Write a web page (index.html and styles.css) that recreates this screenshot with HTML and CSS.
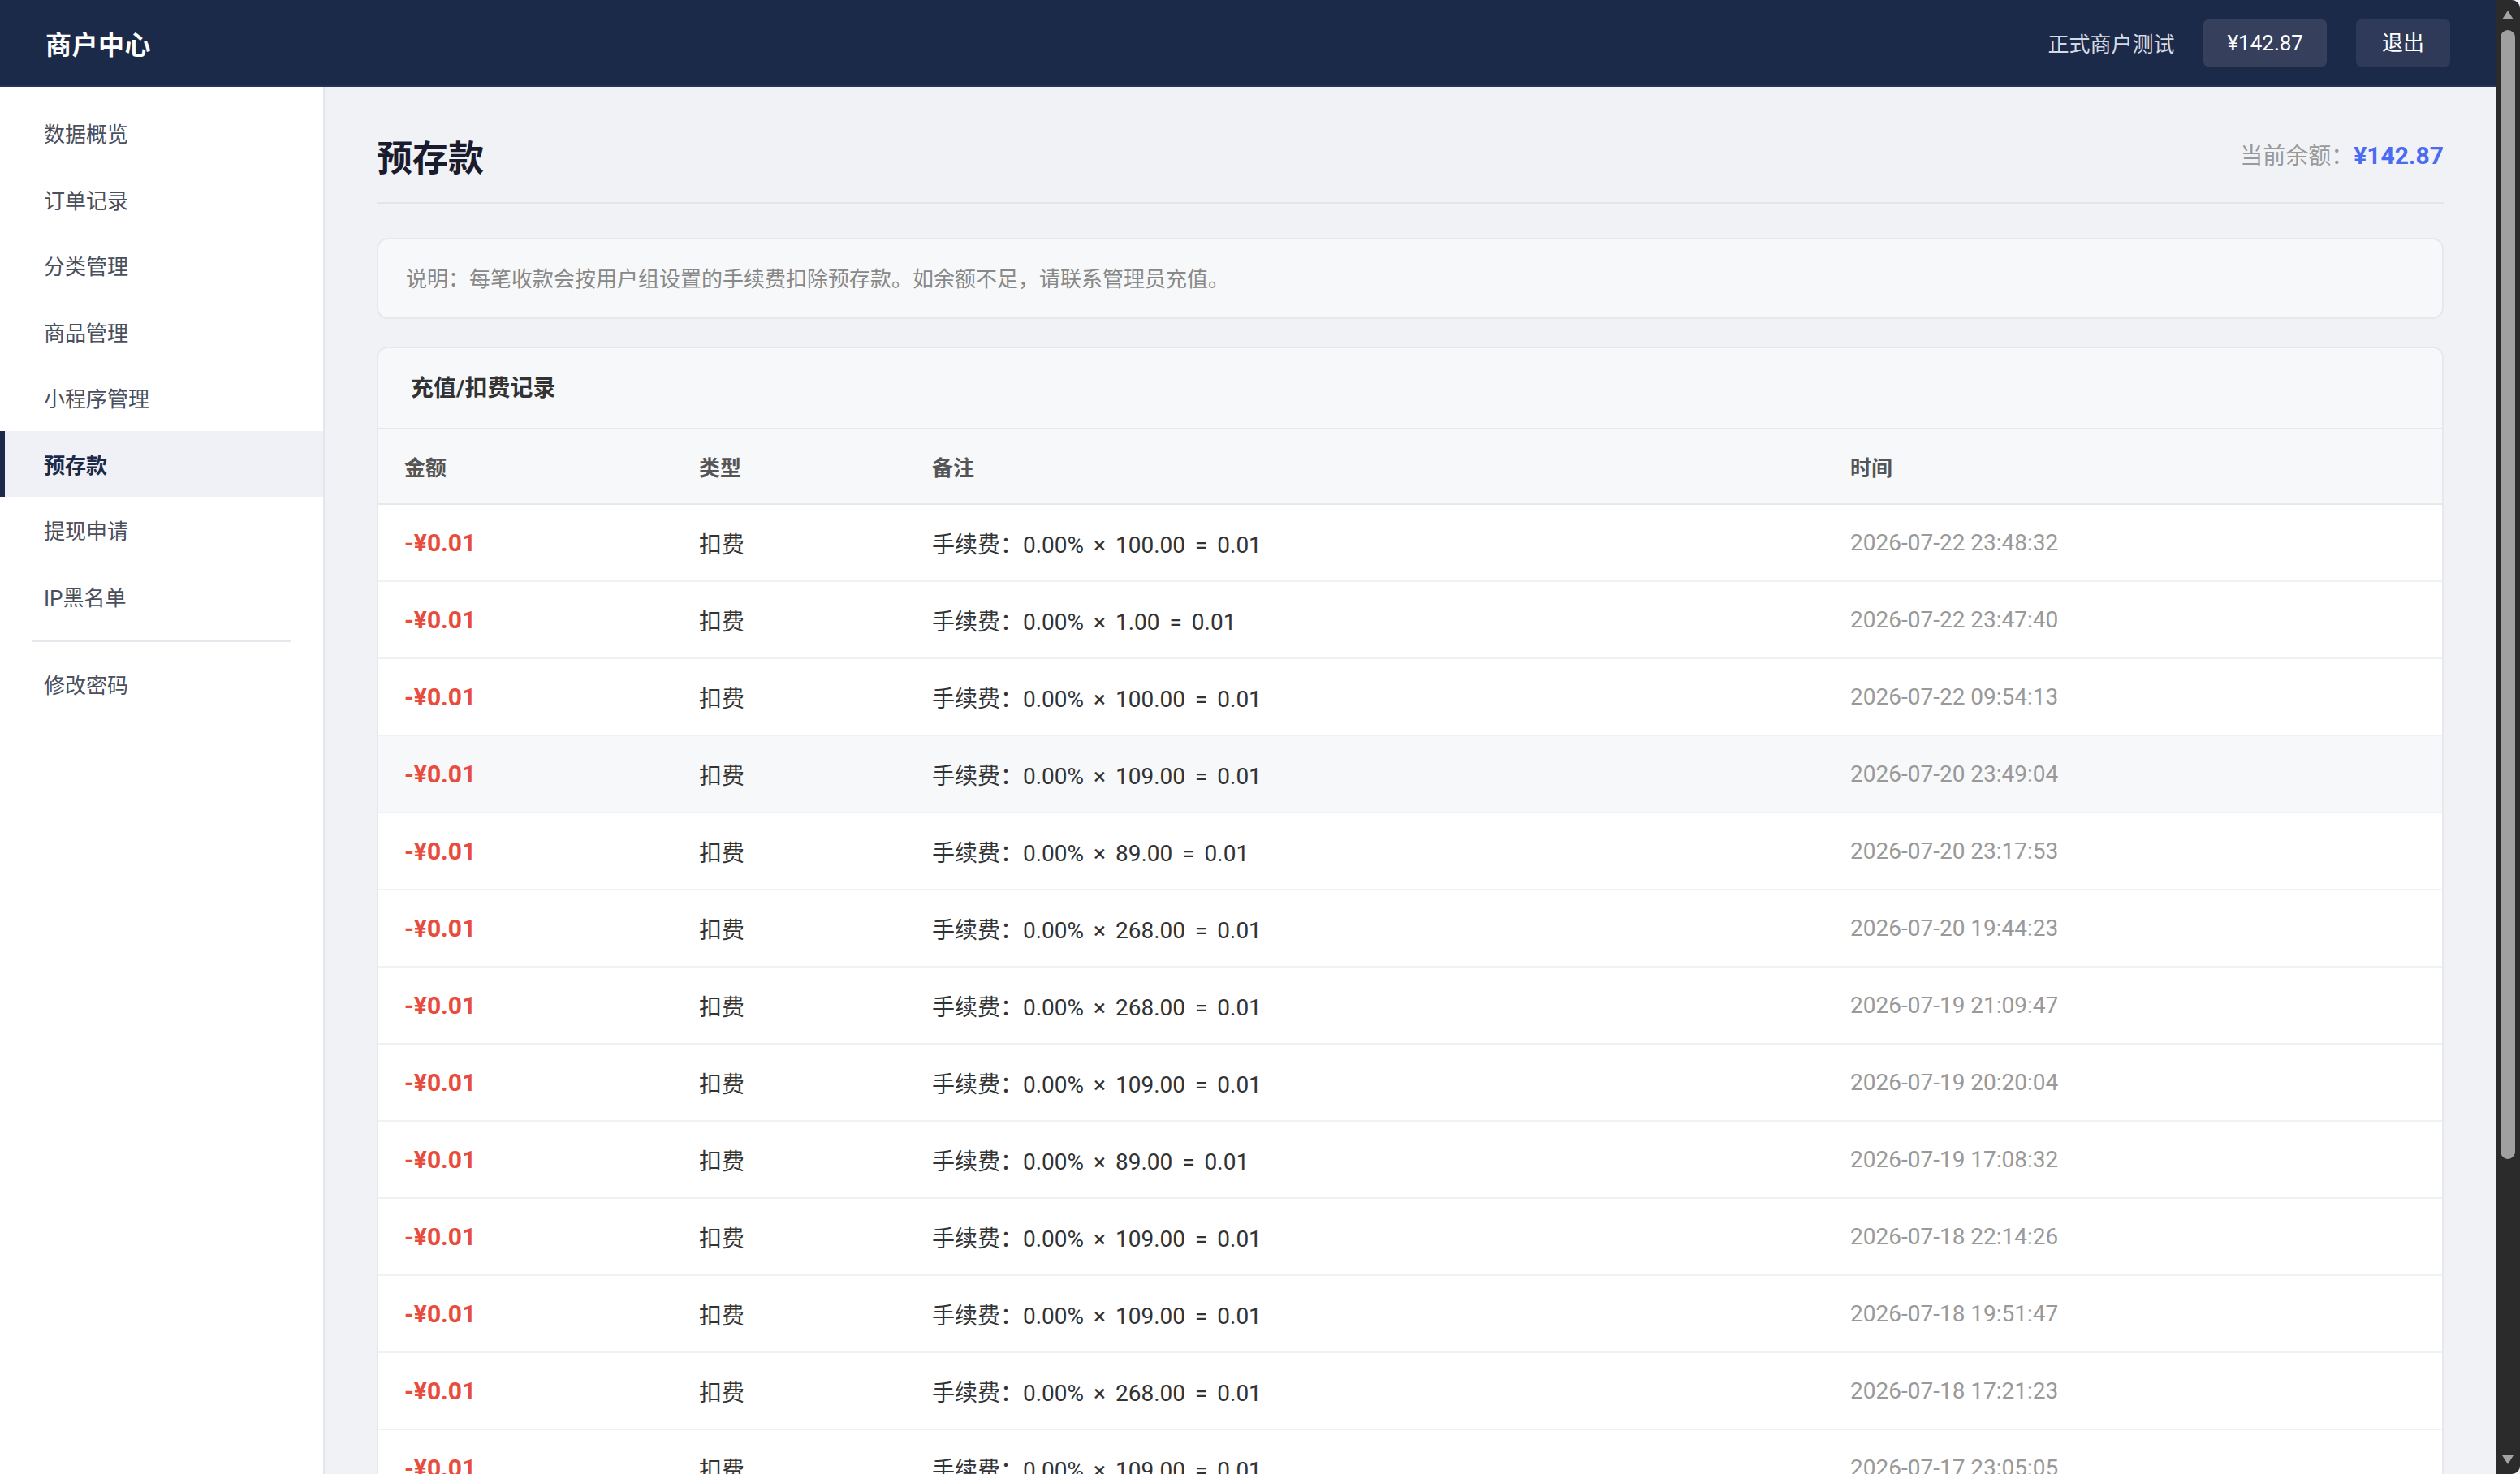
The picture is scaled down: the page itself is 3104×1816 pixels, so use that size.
FILE: index.html
```html
<!DOCTYPE html>
<html lang="zh-CN">
<head>
<meta charset="utf-8">
<title>商户中心 - 预存款</title>
<link rel="stylesheet" href="styles.css">
</head>
<body>
<div class="screen">
  <div class="app">
    <header class="topbar">
      <div class="brand">商户中心</div>
      <div class="top-right">
        <span class="merchant">正式商户测试</span>
        <span class="pill">¥142.87</span>
        <span class="logout">退出</span>
      </div>
    </header>
    <div class="layout">
      <aside class="sidebar">
        <div class="nav-item">数据概览</div>
        <div class="nav-item">订单记录</div>
        <div class="nav-item">分类管理</div>
        <div class="nav-item">商品管理</div>
        <div class="nav-item">小程序管理</div>
        <div class="nav-item active">预存款</div>
        <div class="nav-item">提现申请</div>
        <div class="nav-item">IP黑名单</div>
        <div class="nav-divider"></div>
        <div class="nav-item">修改密码</div>
      </aside>
      <main class="main">
        <div class="page-head">
          <h1 class="page-title">预存款</h1>
          <div class="balance">当前余额：<strong>¥142.87</strong></div>
        </div>
        <div class="notice">说明：每笔收款会按用户组设置的手续费扣除预存款。如余额不足，请联系管理员充值。</div>
        <div class="card">
          <div class="card-head">充值/扣费记录</div>
          <table class="records">
            <colgroup>
              <col class="c-amount"><col class="c-type"><col class="c-note"><col class="c-time">
            </colgroup>
            <thead>
              <tr><th>金额</th><th>类型</th><th>备注</th><th>时间</th></tr>
            </thead>
            <tbody>
              <tr><td class="amt">-¥0.01</td><td>扣费</td><td class="note">手续费：0.00% × 100.00 = 0.01</td><td class="time">2026-07-22 23:48:32</td></tr>
              <tr><td class="amt">-¥0.01</td><td>扣费</td><td class="note">手续费：0.00% × 1.00 = 0.01</td><td class="time">2026-07-22 23:47:40</td></tr>
              <tr><td class="amt">-¥0.01</td><td>扣费</td><td class="note">手续费：0.00% × 100.00 = 0.01</td><td class="time">2026-07-22 09:54:13</td></tr>
              <tr class="hover"><td class="amt">-¥0.01</td><td>扣费</td><td class="note">手续费：0.00% × 109.00 = 0.01</td><td class="time">2026-07-20 23:49:04</td></tr>
              <tr><td class="amt">-¥0.01</td><td>扣费</td><td class="note">手续费：0.00% × 89.00 = 0.01</td><td class="time">2026-07-20 23:17:53</td></tr>
              <tr><td class="amt">-¥0.01</td><td>扣费</td><td class="note">手续费：0.00% × 268.00 = 0.01</td><td class="time">2026-07-20 19:44:23</td></tr>
              <tr><td class="amt">-¥0.01</td><td>扣费</td><td class="note">手续费：0.00% × 268.00 = 0.01</td><td class="time">2026-07-19 21:09:47</td></tr>
              <tr><td class="amt">-¥0.01</td><td>扣费</td><td class="note">手续费：0.00% × 109.00 = 0.01</td><td class="time">2026-07-19 20:20:04</td></tr>
              <tr><td class="amt">-¥0.01</td><td>扣费</td><td class="note">手续费：0.00% × 89.00 = 0.01</td><td class="time">2026-07-19 17:08:32</td></tr>
              <tr><td class="amt">-¥0.01</td><td>扣费</td><td class="note">手续费：0.00% × 109.00 = 0.01</td><td class="time">2026-07-18 22:14:26</td></tr>
              <tr><td class="amt">-¥0.01</td><td>扣费</td><td class="note">手续费：0.00% × 109.00 = 0.01</td><td class="time">2026-07-18 19:51:47</td></tr>
              <tr><td class="amt">-¥0.01</td><td>扣费</td><td class="note">手续费：0.00% × 268.00 = 0.01</td><td class="time">2026-07-18 17:21:23</td></tr>
              <tr><td class="amt">-¥0.01</td><td>扣费</td><td class="note">手续费：0.00% × 109.00 = 0.01</td><td class="time">2026-07-17 23:05:05</td></tr>
              <tr><td class="amt">-¥0.01</td><td>扣费</td><td class="note">手续费：0.00% × 109.00 = 0.01</td><td class="time">2026-07-17 22:41:10</td></tr>
            </tbody>
          </table>
        </div>
      </main>
    </div>
  </div>
  <div class="scrollbar">
    <div class="arrow-up"></div>
    <div class="thumb"></div>
    <div class="spacer"></div>
    <div class="arrow-down"></div>
  </div>
</div>
</body>
</html>
```

FILE: styles.css
```css
* { box-sizing: border-box; }

html, body {
  margin: 0;
  padding: 0;
  height: 100%;
  overflow: hidden;
}

body {
  font-family: "Roboto", "Noto Sans CJK SC", sans-serif;
  color: #333;
  background: #f0f2f6;
}

.screen {
  display: flex;
  height: 100vh;
}

.app {
  flex: 1;
  min-width: 0;
  display: flex;
  flex-direction: column;
  overflow: hidden;
}

/* Top bar */
.topbar {
  flex: 0 0 107px;
  height: 107px;
  background: #1c2a4a;
  border-bottom: 2px solid #24335a;
  padding: 0 56px;
  display: flex;
  align-items: center;
  justify-content: space-between;
}

.brand {
  font-family: "Noto Sans CJK SC", sans-serif;
  font-size: 32px;
  font-weight: 700;
  color: #ffffff;
  letter-spacing: 0.5px;
}

.top-right {
  display: flex;
  align-items: center;
  gap: 36px;
}

.merchant {
  font-size: 26px;
  color: #d5d9e2;
}

.pill,
.logout {
  height: 58px;
  line-height: 58px;
  border-radius: 6px;
  font-size: 26px;
  color: #ffffff;
}

.pill {
  padding: 0 29px;
  background: #363f5c;
}

.logout {
  padding: 0 32px;
  background: #2f3a58;
}

/* Layout */
.layout {
  flex: 1;
  display: flex;
  min-height: 0;
}

.sidebar {
  flex: 0 0 400px;
  background: #ffffff;
  border-right: 2px solid #e4e6eb;
  padding-top: 16px;
}

.nav-item {
  height: 81.5px;
  display: flex;
  align-items: center;
  padding-left: 54px;
  font-size: 26px;
  color: #4a4f5d;
}

.nav-item.active {
  background: #eff1f6;
  border-left: 6px solid #1c2a4a;
  padding-left: 48px;
  color: #1c2a4a;
  font-weight: 700;
}

.nav-divider {
  height: 2px;
  background: #e4e7ec;
  margin: 14px 40px 11px;
}

/* Main */
.main {
  flex: 1;
  min-width: 0;
  background: #f0f2f6;
  padding: 56px 64px 0;
  overflow: hidden;
}

.page-head {
  display: flex;
  align-items: center;
  justify-content: space-between;
  height: 88px;
  padding-bottom: 28px;
  border-bottom: 2px solid #e2e5ea;
}

.page-title {
  margin: 0;
  font-family: "Noto Sans CJK SC", sans-serif;
  font-size: 44px;
  font-weight: 700;
  color: #1a1b2e;
  line-height: 56px;
}

.balance {
  font-size: 28px;
  color: #999999;
  line-height: 58px;
}

.balance strong {
  color: #4c6bf3;
  font-weight: 700;
  font-size: 30px;
}

.notice {
  margin-top: 42px;
  height: 100px;
  line-height: 98px;
  padding: 0 34px;
  background: #f7f8fa;
  border: 2px solid #e6e8ec;
  border-radius: 14px;
  font-size: 26px;
  color: #888888;
}

.card {
  margin-top: 34px;
  background: #ffffff;
  border: 2px solid #e6e8ec;
  border-bottom: none;
  border-radius: 14px 14px 0 0;
  overflow: hidden;
}

.card-head {
  height: 100px;
  line-height: 100px;
  padding: 0 40px;
  background: #f7f8fa;
  border-bottom: 2px solid #e6e8ec;
  font-size: 28px;
  font-weight: 700;
  color: #333333;
}

.records {
  width: 100%;
  border-collapse: collapse;
  table-layout: fixed;
}

.c-amount { width: 363px; }
.c-type { width: 287px; }
.c-note { width: 1131px; }

.records th {
  height: 92px;
  padding: 0 0 0 32px;
  text-align: left;
  font-size: 26px;
  font-weight: 700;
  color: #555555;
  background: #f7f8fa;
  border-bottom: 2px solid #e6e8ec;
}

.records td {
  height: 95px;
  padding: 0 0 0 32px;
  font-size: 28px;
  color: #333333;
  border-bottom: 2px solid #f0f1f3;
  white-space: nowrap;
}

.records tr.hover td {
  background: #f7f8fa;
}

.records td.amt {
  color: #e74c3c;
  font-weight: 700;
  font-size: 30px;
}

.records td.note {
  word-spacing: 5px;
}

.records td.time {
  color: #999999;
}

/* Scrollbar */
.scrollbar {
  flex: 0 0 30px;
  background: #2b2b2b;
  display: flex;
  flex-direction: column;
  align-items: center;
  padding: 13px 0 12px;
  border-radius: 0 10px 10px 0;
}

.arrow-up {
  width: 0;
  height: 0;
  border-left: 7px solid transparent;
  border-right: 7px solid transparent;
  border-bottom: 11px solid #a3a3a3;
}

.arrow-down {
  width: 0;
  height: 0;
  border-left: 7px solid transparent;
  border-right: 7px solid transparent;
  border-top: 11px solid #a3a3a3;
}

.thumb {
  width: 18px;
  height: 1391px;
  margin-top: 13px;
  border-radius: 9px;
  background: #a0a0a0;
}

.spacer {
  flex: 1;
}
```
